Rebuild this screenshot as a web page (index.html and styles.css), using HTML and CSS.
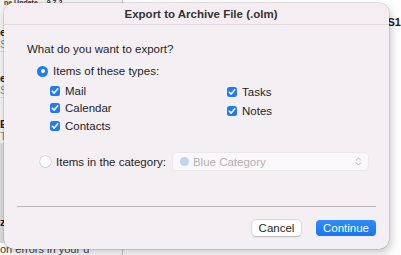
FILE: index.html
```html
<!DOCTYPE html>
<html>
<head>
<meta charset="utf-8">
<link rel="stylesheet" href="styles.css">
</head>
<body>
<div class="app">
  <div class="list">
    <div class="list-top">ne Update…  9 7 2…</div>
    <div class="item"><span class="ltr">e</span><span class="sub">S</span></div>
    <div class="item"><span class="ltr">e</span><span class="sub">S</span></div>
    <div class="item"><span class="ltr">E</span><span class="sub">Tc</span></div>
    <div class="item sel"><span class="ltr">z</span></div>
    <div class="list-bottom">on errors in your d</div>
  </div>
  <div class="main">
    <div class="main-code">AS1</div>
  </div>
</div>

<div class="dialog">
  <div class="titlebar">Export to Archive File (.olm)</div>
  <div class="body">
    <div class="question">What do you want to export?</div>
    <label class="radio-row">
      <span class="radio on"></span>
      <span>Items of these types:</span>
    </label>
    <div class="types">
      <div class="col col-left">
        <div class="check-row"><span class="cb"><svg viewBox="0 0 10 10"><path d="M2.3 5.2 L4.2 7.1 L7.8 2.8" /></svg></span>Mail</div>
        <div class="check-row"><span class="cb"><svg viewBox="0 0 10 10"><path d="M2.3 5.2 L4.2 7.1 L7.8 2.8" /></svg></span>Calendar</div>
        <div class="check-row"><span class="cb"><svg viewBox="0 0 10 10"><path d="M2.3 5.2 L4.2 7.1 L7.8 2.8" /></svg></span>Contacts</div>
      </div>
      <div class="col col-right">
        <div class="check-row r"><span class="cb"><svg viewBox="0 0 10 10"><path d="M2.3 5.2 L4.2 7.1 L7.8 2.8" /></svg></span>Tasks</div>
        <div class="check-row r"><span class="cb"><svg viewBox="0 0 10 10"><path d="M2.3 5.2 L4.2 7.1 L7.8 2.8" /></svg></span>Notes</div>
      </div>
    </div>
    <div class="category-row">
      <span class="radio off"></span>
      <span class="cat-label">Items in the category:</span>
      <div class="popup">
        <span class="dot"></span>
        <span class="popup-text">Blue Category</span>
        <svg class="chev" viewBox="0 0 8 12"><path d="M1.5 4.5 L4 2 L6.5 4.5 M1.5 7.5 L4 10 L6.5 7.5" /></svg>
      </div>
    </div>
  </div>
  <div class="sep"></div>
  <div class="buttons">
    <button class="btn cancel">Cancel</button>
    <button class="btn primary">Continue</button>
  </div>
</div>
</body>
</html>
```

FILE: styles.css
```css
html, body {
  margin: 0;
  padding: 0;
}
body {
  width: 401px;
  height: 255px;
  overflow: hidden;
  position: relative;
  background: #ececec;
  font-family: "Liberation Sans", "Inter", sans-serif;
  color: #222;
}
.app {
  display: flex;
  height: 255px;
}
.list {
  width: 122px;
  border-right: 1px solid #c8c8c8;
  background: #f2f2f2;
  display: flex;
  flex-direction: column;
  align-items: flex-start;
  font-size: 11px;
}
.list-top {
  height: 6px;
  line-height: 6px;
  font-size: 7px;
  font-weight: 700;
  color: #333;
  padding-left: 4px;
  white-space: nowrap;
}
.item {
  align-self: stretch;
  height: 46px;
  border-bottom: 1px solid #dcdcdc;
  display: flex;
  flex-direction: column;
  align-items: flex-start;
  padding-top: 20px;
  box-sizing: border-box;
  font-size: 11px;
  line-height: 12px;
}
.item .ltr { font-weight: 700; color: #222; }
.item .sub { color: #888; }
.item.sel {
  background: #dadada;
  flex: 1;
  padding-top: 72px;
}
.list-bottom {
  height: 12px;
  line-height: 12px;
  color: #444;
  white-space: nowrap;
  overflow: hidden;
  align-self: stretch;
  background: #fff;
}
.main {
  flex: 1;
  background: #fff;
  position: relative;
}
.main-code {
  position: absolute;
  right: 0;
  top: 16px;
  font-size: 11px;
  font-weight: 700;
}

.dialog {
  position: absolute;
  left: 4px;
  top: 3px;
  width: 385px;
  height: 246px;
  background: #f4eff3;
  border-radius: 10px;
  box-shadow: 0 0 0 0.5px rgba(0,0,0,0.18), 2px 4px 10px rgba(0,0,0,0.22);
  overflow: hidden;
  font-size: 11.5px;
  display: flex;
  flex-direction: column;
}
.titlebar {
  height: 22px;
  line-height: 22px;
  text-align: center;
  font-weight: 700;
  font-size: 11.5px;
  color: #333;
  background: #f6edf3;
  border-bottom: 1px solid #e3dbe0;
  padding-left: 9px;
  box-sizing: border-box;
}
.body {
  padding: 16px 0 0 23px;
  display: flex;
  flex-direction: column;
  flex: 1;
  color: #1e1e1e;
}
.question {
  height: 16px;
  line-height: 16px;
}
.radio-row {
  display: flex;
  align-items: center;
  gap: 5px;
  margin-top: 6px;
  margin-left: 10px;
  height: 16px;
}
.radio {
  width: 11px;
  height: 11px;
  border-radius: 50%;
  box-sizing: border-box;
  flex: none;
}
.radio.on {
  background: #1f7cf4;
  position: relative;
}
.radio.on::after {
  content: "";
  position: absolute;
  left: 3.5px;
  top: 3.5px;
  width: 4px;
  height: 4px;
  border-radius: 50%;
  background: #fff;
}
.radio.off {
  background: #fff;
  box-shadow: 0 0 0 0.5px rgba(0,0,0,0.2), 0 0.5px 1px rgba(0,0,0,0.15);
}
.types {
  display: flex;
  margin-top: 3px;
  margin-left: 23px;
}
.col {
  display: flex;
  flex-direction: column;
}
.col-left {
  width: 177px;
  flex: none;
}
.col-right {
  flex: 1;
}
.check-row {
  display: flex;
  align-items: center;
  gap: 5px;
  height: 17.5px;
}
.check-row.r { height: 19px; }
.cb {
  width: 10px;
  height: 10px;
  border-radius: 2.5px;
  background: #1f7cf4;
  display: flex;
  flex: none;
}
.cb svg {
  width: 10px;
  height: 10px;
  fill: none;
  stroke: #fff;
  stroke-width: 1.6;
  stroke-linecap: round;
  stroke-linejoin: round;
}
.category-row {
  display: flex;
  align-items: center;
  margin-top: 18px;
  margin-left: 13px;
  height: 18px;
}
.cat-label {
  margin-left: 5px;
}
.popup {
  margin-left: 7px;
  width: 195px;
  height: 17px;
  box-sizing: border-box;
  background: rgba(255,255,255,0.55);
  border-radius: 4px;
  box-shadow: 0 0 0 0.5px rgba(0,0,0,0.06);
  display: flex;
  align-items: center;
  padding: 0 6px 0 7px;
}
.dot {
  width: 9px;
  height: 9px;
  border-radius: 50%;
  background: #bfd3f2;
  flex: none;
}
.popup-text {
  margin-left: 4px;
  color: #b3b0b3;
  flex: 1;
}
.chev {
  width: 7px;
  height: 11px;
  fill: none;
  stroke: #b3b0b3;
  stroke-width: 1.1;
  stroke-linecap: round;
  stroke-linejoin: round;
}
.sep {
  height: 1px;
  background: #bcb6bb;
  margin: 0 13px;
}
.buttons {
  display: flex;
  justify-content: flex-end;
  gap: 15px;
  padding: 13px 13px 13px 0;
}
.btn {
  font-family: "Liberation Sans", "Inter", sans-serif;
  font-size: 11.5px;
  height: 16px;
  line-height: 16px;
  padding: 0;
  border: none;
  border-radius: 4px;
}
.cancel {
  width: 49px;
  background: #fff;
  color: #1e1e1e;
  box-shadow: 0 0 0 0.5px rgba(0,0,0,0.12), 0 0.5px 1.5px rgba(0,0,0,0.2);
}
.primary {
  width: 60px;
  background: linear-gradient(#2f8cf9, #1677f3);
  color: #fff;
}
```
